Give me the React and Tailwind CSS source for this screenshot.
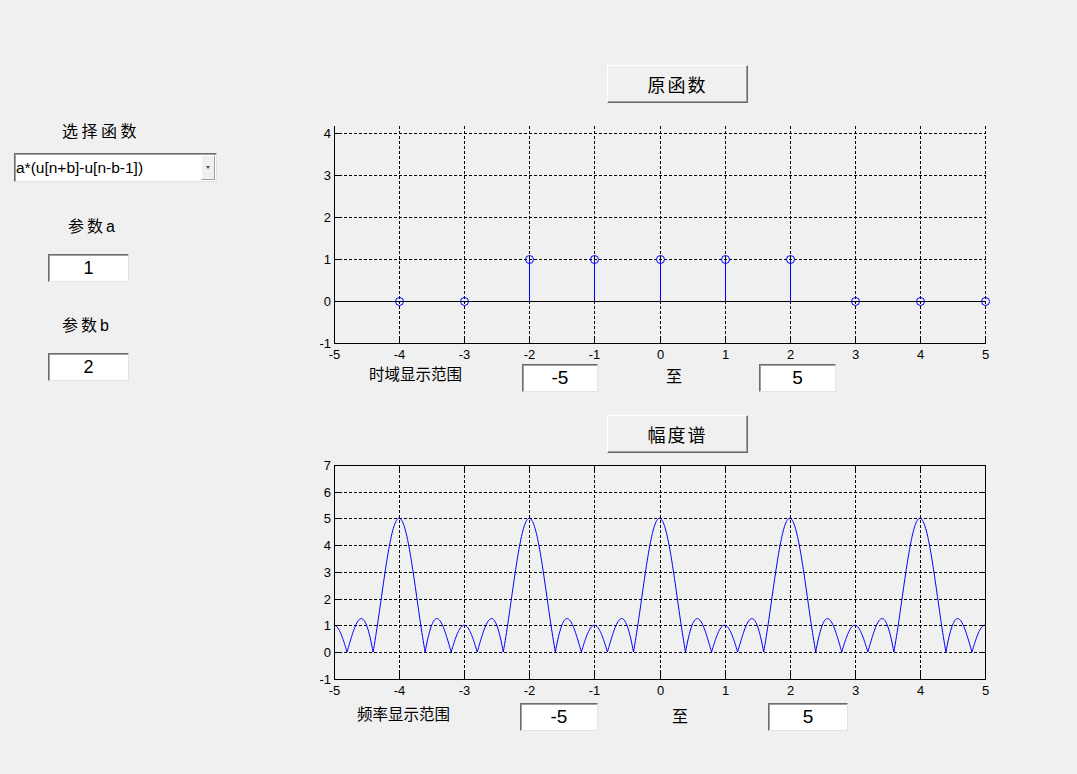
import React from "react";

const cjk = { fontFamily: '"Noto Sans CJK SC", "Noto Sans", sans-serif' };
const latin = { fontFamily: '"Liberation Sans", Arial, sans-serif' };

function EditBox({ value, className = "" }) {
  return (
    <div
      className={`flex items-center justify-center bg-white border border-t-[#6d6d6d] border-l-[#6d6d6d] border-r-[#e3e3e3] border-b-[#e3e3e3] shadow-[inset_1px_1px_0_#a0a0a0] text-black ${className}`}
      style={latin}
    >
      {value}
    </div>
  );
}

function PushButton({ label }) {
  return (
    <button
      className="ml-[307px] w-[141px] h-[38px] flex items-center justify-center bg-[#f0f0f0] border border-t-white border-l-white border-r-[#696969] border-b-[#696969] shadow-[inset_-1px_-1px_0_#a0a0a0] text-[18px] tracking-[2px] text-black"
      style={cjk}
    >
      {label}
    </button>
  );
}

const xs = [-5, -4, -3, -2, -1, 0, 1, 2, 3, 4, 5];
const px = (v) => Math.round(34 + (v + 5) * 65.1) + 0.5;

// top plot: stem of a*(u[n+b]-u[n-b-1])
function StemPlot() {
  const Y = (v) => 183 - v * 42;
  return (
    <svg width="700" height="244" className="block" style={latin}>
      {/* grid */}
      <g stroke="#000" strokeDasharray="3 2" strokeWidth="1" shapeRendering="crispEdges">
        {xs.slice(1).map((v) => (
          <line key={"v" + v} x1={px(v)} x2={px(v)} y1={8} y2={225} />
        ))}
        {[1, 2, 3, 4].map((v) => (
          <line key={"h" + v} x1={34} x2={686} y1={Y(v) + 0.5} y2={Y(v) + 0.5} />
        ))}
      </g>
      {/* axes */}
      <g stroke="#000" strokeWidth="1" shapeRendering="crispEdges">
        <line x1={34.5} x2={34.5} y1={8} y2={225.5} />
        <line x1={34} x2={686} y1={225.5} y2={225.5} />
        <line x1={34} x2={686} y1={183.5} y2={183.5} />
        {[-1, 0, 1, 2, 3, 4].map((v) => (
          <line key={"lt" + v} x1={34} x2={40} y1={Y(v) + 0.5} y2={Y(v) + 0.5} />
        ))}
        {xs.map((v) => (
          <line key={"bt" + v} x1={px(v)} x2={px(v)} y1={219} y2={225} />
        ))}
      </g>
      {/* stems */}
      <g stroke="#0000ff" strokeWidth="1" fill="none">
        {[-2, -1, 0, 1, 2].map((v) => (
          <line key={"s" + v} x1={px(v)} x2={px(v)} y1={183} y2={Y(1) + 0.5} shapeRendering="crispEdges" />
        ))}
        {xs.slice(1).map((v) => (
          <circle key={"c" + v} cx={px(v)} cy={Math.abs(v) <= 2 ? Y(1) + 0.5 : Y(0) + 0.5} r={4} />
        ))}
      </g>
      {/* tick labels */}
      <g fontSize="13" fill="#000">
        {[-1, 0, 1, 2, 3, 4].map((v) => (
          <text key={"yl" + v} x={31} y={Y(v) + 5} textAnchor="end">
            {v}
          </text>
        ))}
        {xs.map((v) => (
          <text key={"xl" + v} x={px(v)} y={241} textAnchor="middle">
            {v}
          </text>
        ))}
      </g>
    </svg>
  );
}

// bottom plot: |X(w)|
function SpectrumPlot() {
  const Y = (v) => 196 - v * 26.75;
  const pts = [];
  for (let i = 0; i <= 1000; i++) {
    const x = -5 + i * 0.01;
    const d = Math.sin((Math.PI * x) / 2);
    const val = Math.abs(d) < 1e-9 ? 5 : Math.abs(Math.sin((5 * Math.PI * x) / 2) / d);
    pts.push(`${(34 + (x + 5) * 65.1).toFixed(2)},${Y(val).toFixed(2)}`);
  }
  return (
    <svg width="700" height="244" className="block" style={latin}>
      <g stroke="#000" strokeDasharray="3 2" strokeWidth="1" shapeRendering="crispEdges">
        {xs.slice(1, 10).map((v) => (
          <line key={"v" + v} x1={px(v)} x2={px(v)} y1={9} y2={223} />
        ))}
        {[0, 1, 2, 3, 4, 5, 6].map((v) => (
          <line key={"h" + v} x1={34} x2={685} y1={Math.round(Y(v)) + 0.5} y2={Math.round(Y(v)) + 0.5} />
        ))}
      </g>
      <polyline points={pts.join(" ")} fill="none" stroke="#0000ff" strokeWidth="1" />
      <g stroke="#000" strokeWidth="1" shapeRendering="crispEdges">
        <rect x={34.5} y={9.5} width={651} height={214} fill="none" />
        {[-1, 0, 1, 2, 3, 4, 5, 6, 7].map((v) => (
          <g key={"yt" + v}>
            <line x1={34} x2={40} y1={Math.round(Y(v)) + 0.5} y2={Math.round(Y(v)) + 0.5} />
            <line x1={680} x2={686} y1={Math.round(Y(v)) + 0.5} y2={Math.round(Y(v)) + 0.5} />
          </g>
        ))}
        {xs.map((v) => (
          <g key={"xt" + v}>
            <line x1={px(v)} x2={px(v)} y1={217} y2={223} />
            <line x1={px(v)} x2={px(v)} y1={9} y2={15} />
          </g>
        ))}
      </g>
      <g fontSize="13" fill="#000">
        {[-1, 0, 1, 2, 3, 4, 5, 6, 7].map((v) => (
          <text key={"yl" + v} x={31} y={Math.round(Y(v)) + 5} textAnchor="end">
            {v}
          </text>
        ))}
        {xs.map((v) => (
          <text key={"xl" + v} x={px(v)} y={239} textAnchor="middle">
            {v}
          </text>
        ))}
      </g>
    </svg>
  );
}

export default function App() {
  return (
    <div className="w-[1077px] h-[774px] bg-[#f0f0f0] flex overflow-hidden text-black">
      {/* left controls */}
      <div className="w-[300px] flex flex-col shrink-0">
        <div className="mt-[120px] ml-[62px] h-[20px] leading-[20px] text-[16px] tracking-[3.5px]" style={cjk}>
          选择函数
        </div>
        <div className="mt-[13px] ml-[14px] w-[203px] h-[29px] flex items-center bg-white border border-t-[#6d6d6d] border-l-[#6d6d6d] border-r-[#e3e3e3] border-b-[#e3e3e3] shadow-[inset_1px_1px_0_#a0a0a0]">
          <span className="flex-1 pl-[1px] text-[15.5px] leading-none" style={latin}>
            a*(u[n+b]-u[n-b-1])
          </span>
          <span className="w-[14px] h-[25px] mr-[1px] flex items-center justify-center bg-[#f0f0f0] border border-t-white border-l-white border-r-[#a0a0a0] border-b-[#a0a0a0]">
            <span className="w-0 h-0 border-l-[2.5px] border-r-[2.5px] border-t-[3px] border-l-transparent border-r-transparent border-t-[#555]" />
          </span>
        </div>
        <div className="mt-[33px] ml-[68px] h-[20px] leading-[20px] text-[16px] tracking-[3px]" style={cjk}>
          参数<span style={latin} className="tracking-normal">a</span>
        </div>
        <EditBox value="1" className="mt-[19px] ml-[48px] w-[81px] h-[28px] text-[18px]" />
        <div className="mt-[32px] ml-[62px] h-[20px] leading-[20px] text-[16px] tracking-[3px]" style={cjk}>
          参数<span style={latin} className="tracking-normal">b</span>
        </div>
        <EditBox value="2" className="mt-[19px] ml-[48px] w-[81px] h-[28px] text-[18px]" />
      </div>

      {/* right: plots */}
      <div className="flex flex-col">
        <div className="mt-[65px]">
          <PushButton label="原函数" />
        </div>
        <div className="mt-[15px]">
          <StemPlot />
        </div>
        <div className="mt-[2px] h-[28px] flex">
          <div className="ml-[69px] w-[96px] h-[18px] leading-[18px] text-[15.5px] whitespace-nowrap" style={cjk}>
            时域显示范围
          </div>
          <EditBox value="-5" className="ml-[57px] w-[76px] h-[28px] text-[19px]" />
          <div className="ml-[68px] w-[16px] mt-[3px] h-[16px] leading-[16px] text-[16px]" style={cjk}>
            至
          </div>
          <EditBox value="5" className="ml-[77px] w-[77px] h-[28px] text-[19px]" />
        </div>
        <div className="mt-[23px]">
          <PushButton label="幅度谱" />
        </div>
        <div className="mt-[3px]">
          <SpectrumPlot />
        </div>
        <div className="mt-[3px] h-[28px] flex">
          <div className="ml-[57px] w-[96px] mt-[1px] h-[18px] leading-[18px] text-[15.5px] whitespace-nowrap" style={cjk}>
            频率显示范围
          </div>
          <EditBox value="-5" className="ml-[67px] w-[78px] h-[28px] text-[19px]" />
          <div className="ml-[74px] w-[16px] mt-[4px] h-[16px] leading-[16px] text-[16px]" style={cjk}>
            至
          </div>
          <EditBox value="5" className="ml-[80px] w-[80px] h-[28px] text-[19px]" />
        </div>
      </div>
    </div>
  );
}
